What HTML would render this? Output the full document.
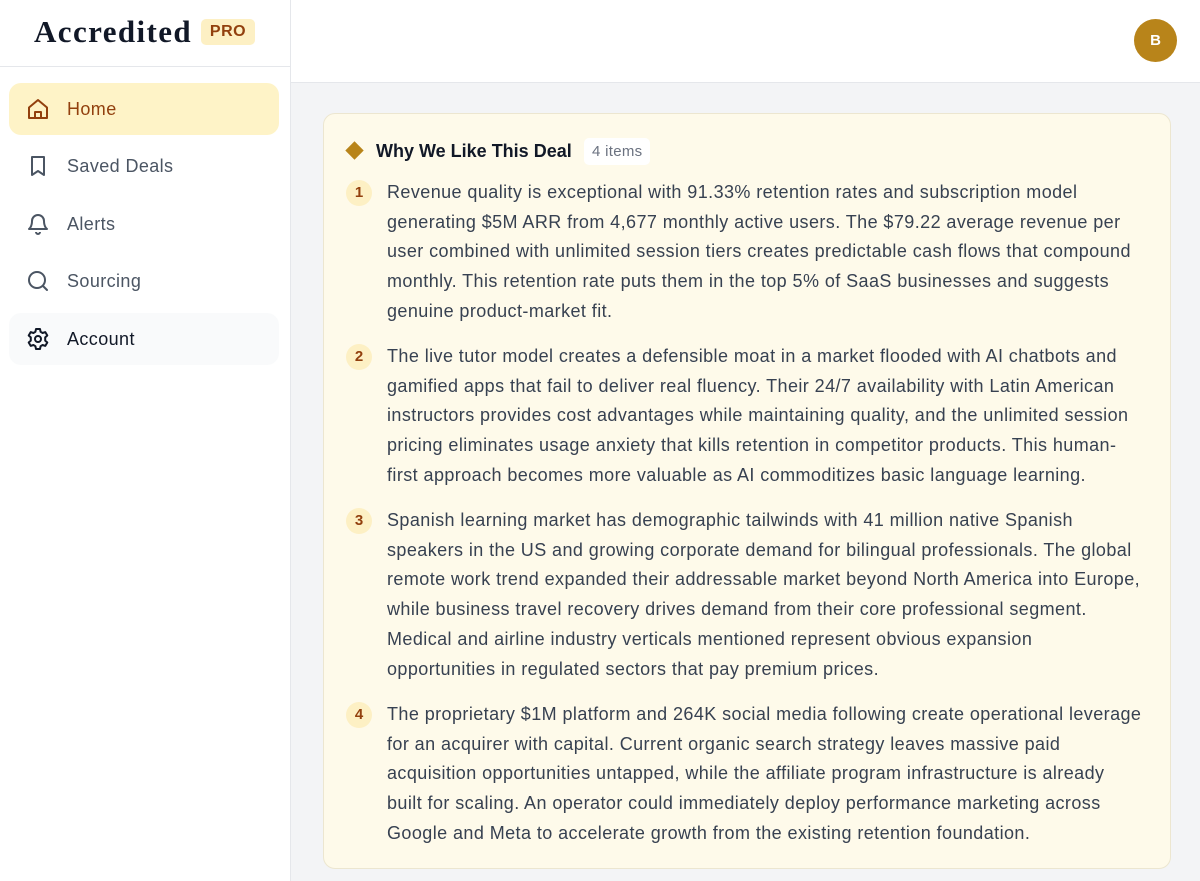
<!DOCTYPE html>
<html><head><meta charset="utf-8"><style>
*{box-sizing:border-box;margin:0;padding:0}
body{width:1200px;height:881px;overflow:hidden;font-family:"Liberation Sans",sans-serif;background:#f3f4f6;position:relative}
.side{position:absolute;left:0;top:0;width:291px;height:881px;background:#fff;border-right:1px solid #e5e7eb}
.logo{position:absolute;left:34px;top:14px;font-family:"Liberation Serif",serif;font-weight:bold;font-size:31px;color:#111827;letter-spacing:1.4px}
.pro{position:absolute;left:201px;top:19px;width:54px;height:26px;background:#fdf0c4;border-radius:5px;color:#92400e;font-weight:bold;font-size:16px;text-align:center;line-height:26px;letter-spacing:0.5px}
.div{position:absolute;left:0;top:66px;width:290px;border-top:1px solid #e5e7eb}
.nav{position:absolute;left:9px;width:270px;height:52px;border-radius:12px;display:flex;align-items:center;font-size:18px;color:#4b5563;letter-spacing:0.4px}
.nav svg{position:absolute;left:17px;top:14px}
.nav span{position:absolute;left:58px}
.top{position:absolute;left:291px;top:0;width:909px;height:83px;background:#fff;border-bottom:1px solid #e5e7eb}
.av{position:absolute;left:1134px;top:19px;width:43px;height:43px;border-radius:50%;background:#b8841a;color:#fff;font-weight:bold;font-size:15px;text-align:center;line-height:43px}
.card{position:absolute;left:323px;top:113px;width:848px;height:756px;background:#fefaea;border:1px solid #ece6d0;border-radius:12px}
.hd{position:absolute;left:52px;top:27px;font-size:18px;font-weight:bold;color:#111827}
.dia{position:absolute;left:24px;top:30px;width:13px;height:13px;background:#b8841a;transform:rotate(45deg)}
.cnt{position:absolute;left:260px;top:24px;height:27px;padding:0 8px;background:#fff;border-radius:5px;font-size:15px;color:#6b7280;line-height:27px;letter-spacing:0.3px}
.it{position:absolute;left:63px;font-size:18px;line-height:29.7px;color:#374151;white-space:nowrap;letter-spacing:0.42px}
.n{position:absolute;left:22px;width:26px;height:26px;border-radius:50%;background:#fdf0c4;color:#92400e;font-weight:bold;font-size:15px;text-align:center;line-height:26px}
</style></head><body>
<div class="side">
<div class="logo">Accredited</div><div class="pro">PRO</div><div class="div"></div>
<div class="nav" style="top:83px;background:#fef3c7;color:#92400e"><svg width="24" height="24" viewBox="0 0 24 24" fill="none" stroke="#92400e" stroke-width="2" stroke-linejoin="round"><path d="M3 10.5L12 3l9 7.5V21H3z"/><path d="M9 21v-6h6v6"/></svg><span>Home</span></div>
<div class="nav" style="top:140px"><svg width="24" height="24" viewBox="0 0 24 24" fill="none" stroke="#4b5563" stroke-width="2" stroke-linejoin="round"><path d="M6 3h12v18l-6-4-6 4z"/></svg><span>Saved Deals</span></div>
<div class="nav" style="top:198px"><svg width="24" height="24" viewBox="0 0 24 24" fill="none" stroke="#4b5563" stroke-width="2" stroke-linejoin="round"><path d="M6 9a6 6 0 0112 0c0 6 3 8 3 8H3s3-2 3-8"/><path d="M10 20a2 2 0 004 0"/></svg><span>Alerts</span></div>
<div class="nav" style="top:255px"><svg width="24" height="24" viewBox="0 0 24 24" fill="none" stroke="#4b5563" stroke-width="2" stroke-linecap="round"><circle cx="11" cy="11" r="8"/><path d="M17 17l4 4"/></svg><span>Sourcing</span></div>
<div class="nav" style="top:313px;background:#f9fafb;color:#111827"><svg width="24" height="24" viewBox="0 0 24 24" fill="none" stroke="#111827" stroke-width="2" stroke-linejoin="round"><circle cx="12" cy="12" r="3"/><path d="M10 2h4l.6 2.8 2 1.2 2.7-.9 2 3.4-2.1 1.9v3.2l2.1 1.9-2 3.4-2.7-.9-2 1.2L14 22h-4l-.6-2.8-2-1.2-2.7.9-2-3.4 2.1-1.9v-3.2L2.7 8.5l2-3.4 2.7.9 2-1.2z"/></svg><span>Account</span></div>
</div>
<div class="top"></div><div class="av">B</div>
<div class="card">
<div class="dia"></div><div class="hd">Why We Like This Deal</div><div class="cnt">4 items</div>
<div class="n" style="top:66px">1</div>
<div class="it" style="top:64px">Revenue quality is exceptional with 91.33% retention rates and subscription model<br>generating $5M ARR from 4,677 monthly active users. The $79.22 average revenue per<br>user combined with unlimited session tiers creates predictable cash flows that compound<br>monthly. This retention rate puts them in the top 5% of SaaS businesses and suggests<br>genuine product-market fit.</div>
<div class="n" style="top:230px">2</div>
<div class="it" style="top:228px">The live tutor model creates a defensible moat in a market flooded with AI chatbots and<br>gamified apps that fail to deliver real fluency. Their 24/7 availability with Latin American<br>instructors provides cost advantages while maintaining quality, and the unlimited session<br>pricing eliminates usage anxiety that kills retention in competitor products. This human-<br>first approach becomes more valuable as AI commoditizes basic language learning.</div>
<div class="n" style="top:394px">3</div>
<div class="it" style="top:392px">Spanish learning market has demographic tailwinds with 41 million native Spanish<br>speakers in the US and growing corporate demand for bilingual professionals. The global<br>remote work trend expanded their addressable market beyond North America into Europe,<br>while business travel recovery drives demand from their core professional segment.<br>Medical and airline industry verticals mentioned represent obvious expansion<br>opportunities in regulated sectors that pay premium prices.</div>
<div class="n" style="top:588px">4</div>
<div class="it" style="top:586px">The proprietary $1M platform and 264K social media following create operational leverage<br>for an acquirer with capital. Current organic search strategy leaves massive paid<br>acquisition opportunities untapped, while the affiliate program infrastructure is already<br>built for scaling. An operator could immediately deploy performance marketing across<br>Google and Meta to accelerate growth from the existing retention foundation.</div>
</div>
</body></html>
